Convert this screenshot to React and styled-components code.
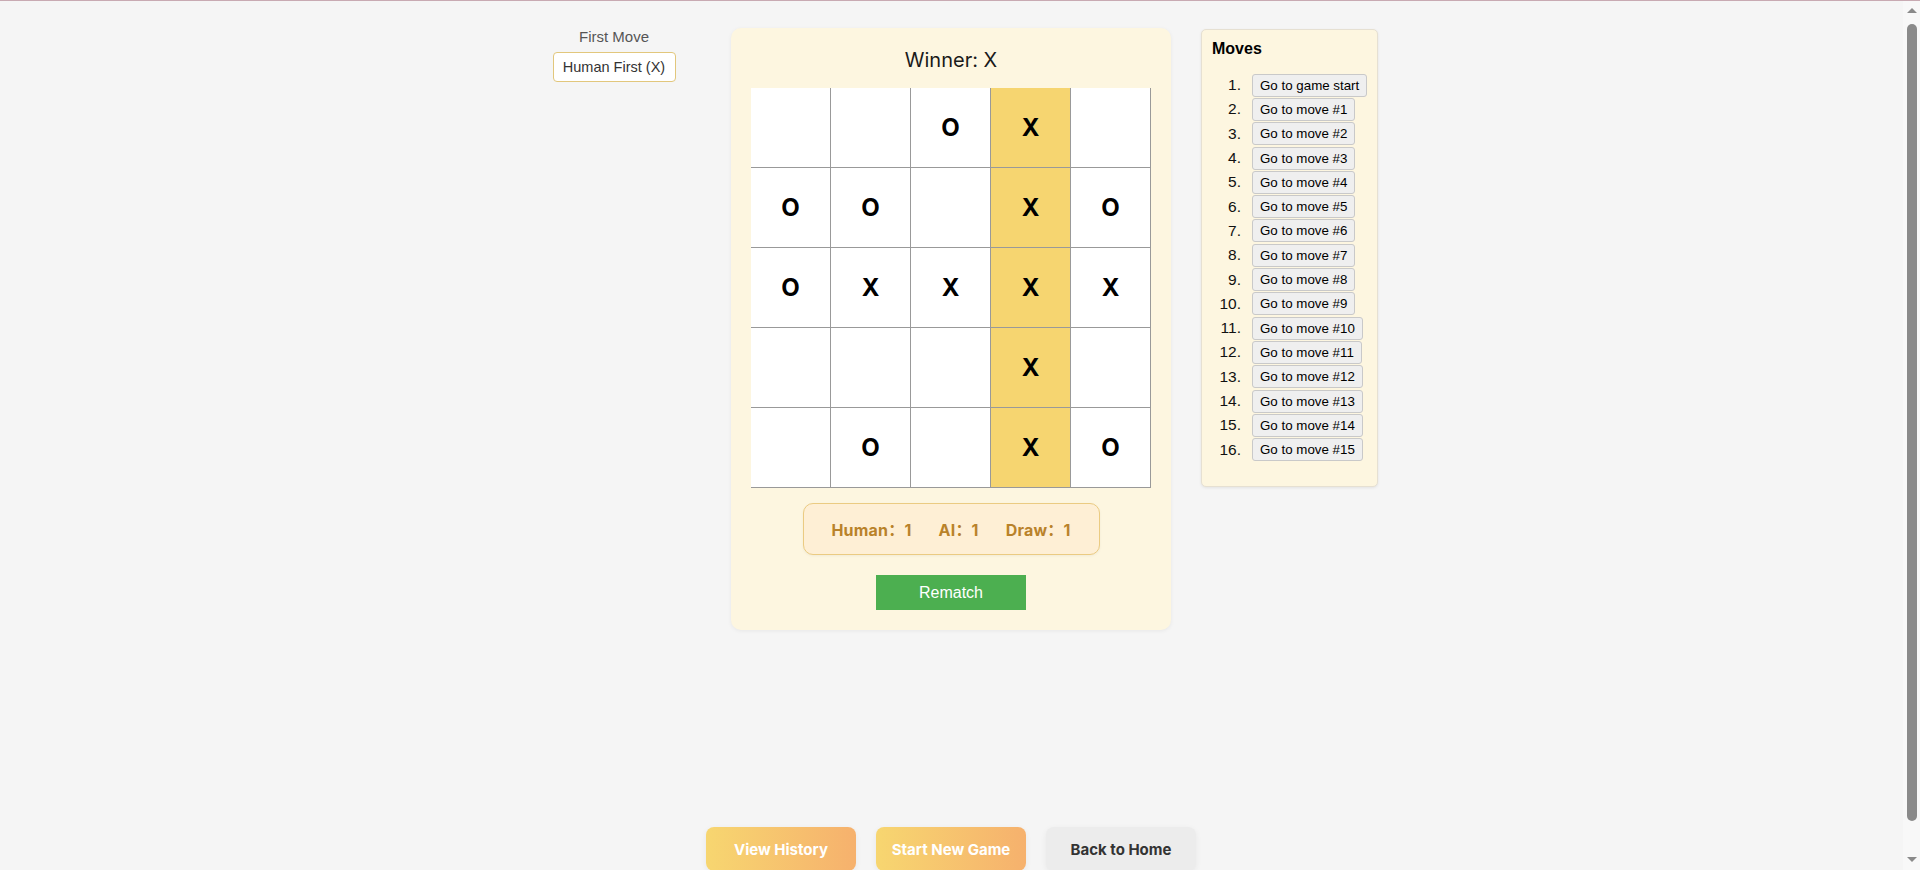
import React from "react";
import styled, { createGlobalStyle } from "styled-components";

const Global = createGlobalStyle`
  html, body { margin: 0; padding: 0; }
  body {
    background: #f5f5f5;
    border-top: 1px solid #c8aab2;
    font-family: "Liberation Sans", Arial, sans-serif;
    color: #222;
    overflow-x: hidden;
  }
`;

const Page = styled.div`
  width: calc(100vw - 18px);
  display: flex;
  flex-direction: column;
  align-items: center;
  padding-top: 27px;
  padding-bottom: 40px;
`;

const GameArea = styled.div`
  width: 100%;
  display: grid;
  grid-template-columns: 1fr 440px 1fr;
  column-gap: 30px;
  align-items: start;
  min-height: 799px;
`;

const SideColumn = styled.div`
  justify-self: end;
  width: 174px;
  display: flex;
  flex-direction: column;
  align-items: center;
`;

const Label = styled.div`
  font-size: 15px;
  line-height: 18px;
  color: #555;
  margin-bottom: 6px;
`;

const Select = styled.div`
  box-sizing: border-box;
  width: 123px;
  height: 30px;
  border: 1px solid #e2c77c;
  border-radius: 4px;
  background: #fff;
  display: flex;
  align-items: center;
  justify-content: center;
  font-size: 14.5px;
  color: #333;
  white-space: nowrap;
`;

const Card = styled.div`
  box-sizing: border-box;
  width: 440px;
  padding: 20px;
  background: #fdf6e0;
  border-radius: 10px;
  box-shadow: 0 1px 4px rgba(0, 0, 0, 0.06);
  display: flex;
  flex-direction: column;
  align-items: center;
`;

const Winner = styled.div`
  font-family: Inter, sans-serif;
  font-size: 20px;
  line-height: 24px;
  color: #1a1a1a;
  margin-bottom: 16px;
`;

const Board = styled.div`
  display: grid;
  grid-template-columns: repeat(5, 80px);
  grid-template-rows: repeat(5, 80px);
`;

const Cell = styled.div`
  box-sizing: border-box;
  border-right: 1px solid #999;
  border-bottom: 1px solid #999;
  background: ${(p) => (p.$win ? "#f6d570" : "#fff")};
  display: flex;
  align-items: center;
  justify-content: center;
  font-family: Inter, sans-serif;
  font-weight: 700;
  font-size: 24px;
  color: #000;
`;

const Score = styled.div`
  box-sizing: border-box;
  margin-top: 15px;
  width: 297px;
  height: 52px;
  background: #feefd5;
  border: 1px solid #ebcb82;
  border-radius: 10px;
  box-shadow: 0 1px 3px rgba(0, 0, 0, 0.05);
  display: flex;
  align-items: center;
  justify-content: center;
  gap: 27px;
  font-family: Inter, "Noto Sans CJK SC", sans-serif;
  font-weight: 700;
  font-size: 16px;
  letter-spacing: 0.2px;
  color: #b9822a;
`;

const Rematch = styled.button`
  margin-top: 20px;
  width: 150px;
  height: 35px;
  border: none;
  background: #4caf50;
  color: #fff;
  font-family: "Liberation Sans", Arial, sans-serif;
  font-size: 16px;
`;

const MovesPanel = styled.div`
  justify-self: start;
  box-sizing: border-box;
  width: max-content;
  margin-top: 1px;
  padding: 10px;
  background: #fdf6e0;
  border: 1px solid #e6e0d2;
  border-radius: 5px;
  box-shadow: 0 1px 3px rgba(0, 0, 0, 0.08);
`;

const MovesTitle = styled.div`
  font-weight: 700;
  font-size: 16px;
  line-height: 18px;
  color: #000;
  margin-bottom: 15px;
`;

const MoveList = styled.ol`
  margin: 0 0 14px;
  padding: 0;
  list-style: none;
`;

const MoveItem = styled.li`
  display: flex;
  align-items: center;
  height: 24.3px;
  white-space: nowrap;
`;

const MoveNumber = styled.span`
  width: 29px;
  margin-right: 11px;
  text-align: right;
  font-size: 15.5px;
  color: #111;
`;

const MoveButton = styled.button`
  box-sizing: border-box;
  height: 23px;
  padding: 0 7px;
  background: #efefef;
  border: 1px solid #c9c9c9;
  border-radius: 3px;
  font-family: "Liberation Sans", Arial, sans-serif;
  font-size: 13.33px;
  color: #000;
  white-space: nowrap;
`;

const Footer = styled.div`
  display: flex;
  gap: 20px;
`;

const NavButton = styled.button`
  width: 150px;
  height: 44px;
  border: none;
  border-radius: 8px;
  font-family: Inter, sans-serif;
  font-weight: 700;
  font-size: 15px;
  color: ${(p) => (p.$plain ? "#333" : "#fff")};
  background: ${(p) =>
    p.$plain ? "#ececec" : "linear-gradient(90deg, #f7d670, #f6b16d)"};
  box-shadow: 0 2px 6px rgba(0, 0, 0, 0.06);
`;

/* drawing of the browser's scrollbar seen on the right edge */
const ScrollBar = styled.div`
  position: fixed;
  top: 1px;
  right: 0;
  bottom: 0;
  width: 17px;
  background: #f8f8f8;
  display: flex;
  flex-direction: column;
  align-items: center;
`;

const Arrow = styled.div`
  width: 0;
  height: 0;
  border-left: 5px solid transparent;
  border-right: 5px solid transparent;
  ${(p) =>
    p.$down
      ? "border-top: 5px solid #8a8a8a; margin-top: auto; margin-bottom: 8px;"
      : "border-bottom: 5px solid #8a8a8a; margin-top: 7px;"}
`;

const Thumb = styled.div`
  width: 10px;
  height: 797px;
  margin-top: 11px;
  background: #8a8a8a;
  border-radius: 5px;
`;

const board = [
  ["", "", "O", "X", ""],
  ["O", "O", "", "X", "O"],
  ["O", "X", "X", "X", "X"],
  ["", "", "", "X", ""],
  ["", "O", "", "X", "O"],
];

const moves = ["Go to game start"];
for (let i = 1; i <= 15; i++) moves.push(`Go to move #${i}`);

export default function App() {
  return (
    <>
      <Global />
      <Page>
        <GameArea>
          <SideColumn>
            <Label>First Move</Label>
            <Select>Human First (X)</Select>
          </SideColumn>
          <Card>
            <Winner>Winner: X</Winner>
            <Board>
              {board.map((row, r) =>
                row.map((v, c) => (
                  <Cell key={`${r}-${c}`} $win={c === 3}>
                    {v}
                  </Cell>
                ))
              )}
            </Board>
            <Score>
              <span>Human：1</span>
              <span>AI：1</span>
              <span>Draw：1</span>
            </Score>
            <Rematch>Rematch</Rematch>
          </Card>
          <MovesPanel>
            <MovesTitle>Moves</MovesTitle>
            <MoveList>
              {moves.map((m, i) => (
                <MoveItem key={m}>
                  <MoveNumber>{i + 1}.</MoveNumber>
                  <MoveButton>{m}</MoveButton>
                </MoveItem>
              ))}
            </MoveList>
          </MovesPanel>
        </GameArea>
        <Footer>
          <NavButton>View History</NavButton>
          <NavButton>Start New Game</NavButton>
          <NavButton $plain>Back to Home</NavButton>
        </Footer>
      </Page>
      <ScrollBar>
        <Arrow />
        <Thumb />
        <Arrow $down />
      </ScrollBar>
    </>
  );
}
